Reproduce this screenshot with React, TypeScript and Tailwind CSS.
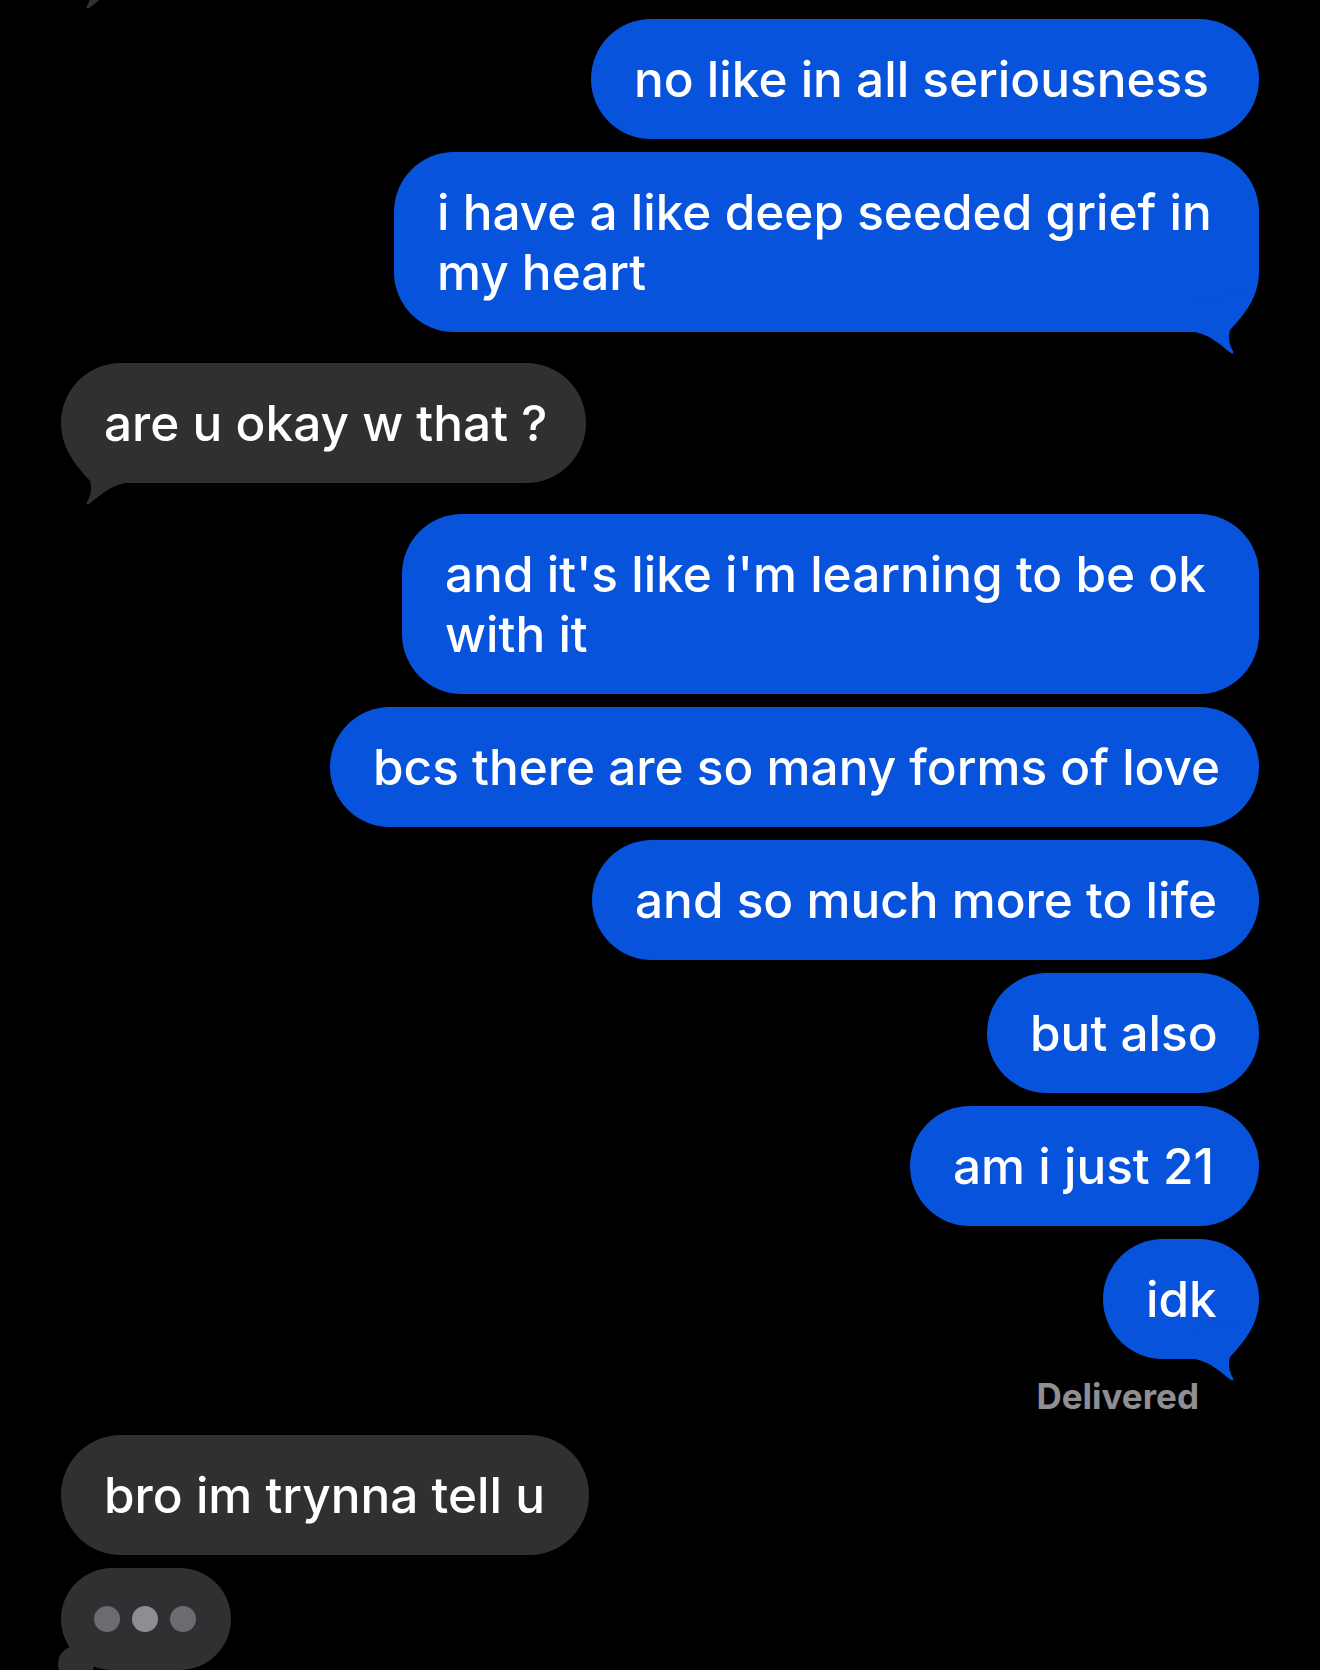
import React from "react";

const BLUE = "#0753dc";
const GRAY = "#303033";

function Tail({ color, side }: { color: string; side: "left" | "right" }) {
  return (
    <svg
      width="70"
      height="70"
      viewBox="0 0 70 70"
      className={
        side === "right"
          ? "absolute right-0 bottom-[-24px]"
          : "absolute left-0 bottom-[-24px] -scale-x-100"
      }
    >
      <path
        d="M 67,4 C 62,22 48,36 41,44 C 39,51 40,58 44,65 C 45,67 44,68 42,67 C 32,60 24,50 6,46 L 6,16 Z"
        fill={color}
      />
    </svg>
  );
}

function Out({
  w,
  lines,
  tail,
  className = "",
}: {
  w: string;
  lines: string[];
  tail?: boolean;
  className?: string;
}) {
  return (
    <div
      className={`relative self-end ${w} ${className} rounded-[60px] bg-[#0753dc] pl-[43px] py-[30px] text-white text-[49.5px] leading-[60px] font-medium whitespace-nowrap`}
    >
      {lines.map((l, i) => (
        <div key={i}>{l}</div>
      ))}
      {tail && <Tail color={BLUE} side="right" />}
    </div>
  );
}

function In({
  w,
  text,
  tail,
  className = "",
}: {
  w: string;
  text: string;
  tail?: boolean;
  className?: string;
}) {
  return (
    <div
      className={`relative self-start ${w} ${className} h-[120px] rounded-[60px] bg-[#303033] pl-[43px] py-[30px] text-white text-[49.5px] leading-[60px] font-medium whitespace-nowrap`}
    >
      {text}
      {tail && <Tail color={GRAY} side="left" />}
    </div>
  );
}

export default function App() {
  return (
    <div
      className="w-[1320px] h-[1670px] bg-black overflow-hidden px-[61px] flex flex-col"
      style={{ fontFamily: "Inter, 'Noto Sans', sans-serif" }}
    >
      <In w="w-[420px]" text="" tail className="mt-[-132px]" />
      <Out w="w-[668px]" lines={["no like in all seriousness"]} className="mt-[32px]" />
      <Out
        w="w-[865px]"
        lines={["i have a like deep seeded grief in", "my heart"]}
        tail
        className="mt-[13px]"
      />
      <In w="w-[525px]" text="are u okay w that ?" tail className="mt-[31px]" />
      <Out
        w="w-[857px]"
        lines={["and it's like i'm learning to be ok", "with it"]}
        className="mt-[31px]"
      />
      <Out w="w-[929px]" lines={["bcs there are so many forms of love"]} className="mt-[13px]" />
      <Out w="w-[667px]" lines={["and so much more to life"]} className="mt-[13px]" />
      <Out w="w-[272px]" lines={["but also"]} className="mt-[13px]" />
      <Out w="w-[349px]" lines={["am i just 21"]} className="mt-[13px]" />
      <Out w="w-[156px]" lines={["idk"]} tail className="mt-[13px]" />
      <div className="self-end mr-[60px] mt-[19px] text-[35px] leading-[36px] font-bold text-[#8e8e93]">
        Delivered
      </div>
      <In w="w-[528px]" text="bro im trynna tell u" className="mt-[21px]" />
      <div className="relative self-start mt-[13px] w-[170px] h-[104px] rounded-[52px] bg-[#303033] flex items-center gap-[12px] pl-[33px]">
        <div className="w-[26px] h-[26px] rounded-full bg-[#6c6c70]" />
        <div className="w-[26px] h-[26px] rounded-full bg-[#8e8e92]" />
        <div className="w-[26px] h-[26px] rounded-full bg-[#6c6c70]" />
        <div className="absolute left-[-3px] top-[78px] w-[36px] h-[36px] rounded-full bg-[#303033]" />
      </div>
    </div>
  );
}
